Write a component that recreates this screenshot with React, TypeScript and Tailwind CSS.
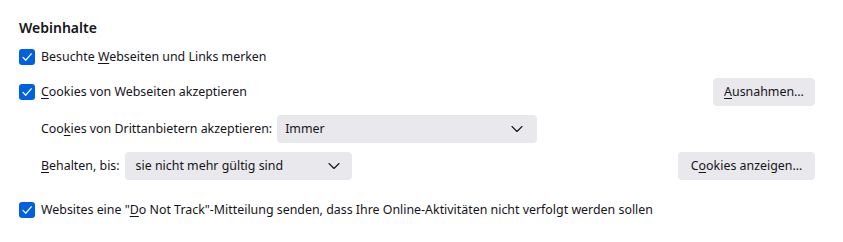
import React from "react";

const font = { fontFamily: '"Noto Sans", "Segoe UI", sans-serif' };

function Check() {
  return (
    <span className="flex h-4 w-4 shrink-0 items-center justify-center rounded-[3px] bg-[#0061e0]">
      <svg width="12" height="12" viewBox="0 0 12 12" fill="none">
        <path d="M2 6.4 L4.8 9.2 L10.2 2.8" stroke="white" strokeWidth="1.3" strokeLinecap="round" strokeLinejoin="round" />
      </svg>
    </span>
  );
}

function Chevron() {
  return (
    <svg width="12" height="8" viewBox="0 0 12 8" fill="none">
      <path d="M1 1.5 L6 6.5 L11 1.5" stroke="#15141a" strokeWidth="1.1" strokeLinecap="round" strokeLinejoin="round" />
    </svg>
  );
}

function U({ children }: { children: React.ReactNode }) {
  return <span className="underline underline-offset-2">{children}</span>;
}

export default function App() {
  return (
    <div className="h-[242px] w-[843px] bg-white pl-[19px] pr-[28px] pt-[17px] text-[12.4px] text-[#15141a]" style={font}>
      <div className="h-[22px] text-[14px] font-semibold leading-[22px]">Webinhalte</div>

      <div className="mt-[4px] flex h-[28px] items-center gap-[6px]">
        <Check />
        <span>
          Besuchte <U>W</U>ebseiten und Links merken
        </span>
      </div>

      <div className="mt-[7px] flex h-[28px] items-center gap-[6px]">
        <Check />
        <span>
          <U>C</U>ookies von Webseiten akzeptieren
        </span>
        <button className="ml-auto flex h-[28px] w-[102px] items-center justify-center rounded-[4px] bg-[#e9e9ed]">
          <span>
            <U>A</U>usnahmen…
          </span>
        </button>
      </div>

      <div className="mt-[9px] flex h-[28px] items-center gap-[5px] pl-[22px]">
        <span>
          Coo<U>k</U>ies von Drittanbietern akzeptieren:
        </span>
        <div className="flex h-[28px] w-[260px] items-center justify-between rounded-[4px] bg-[#e9e9ed] pl-[8px] pr-[14px]">
          <span>Immer</span>
          <Chevron />
        </div>
      </div>

      <div className="mt-[9px] flex h-[28px] items-center gap-[5px] pl-[22px]">
        <span>
          <U>B</U>ehalten, bis:
        </span>
        <div className="flex h-[28px] w-[227px] items-center justify-between rounded-[4px] bg-[#e9e9ed] pl-[11px] pr-[12px]">
          <span>sie nicht mehr gültig sind</span>
          <Chevron />
        </div>
        <button className="ml-auto flex h-[28px] w-[137px] items-center justify-center rounded-[4px] bg-[#e9e9ed]">
          <span>
            C<U>o</U>okies anzeigen…
          </span>
        </button>
      </div>

      <div className="mt-[16px] flex h-[28px] items-center gap-[6px]">
        <Check />
        <span>
          Websites eine "<U>D</U>o Not Track"-Mitteilung senden, dass Ihre Online-Aktivitäten nicht verfolgt werden sollen
        </span>
      </div>
    </div>
  );
}
